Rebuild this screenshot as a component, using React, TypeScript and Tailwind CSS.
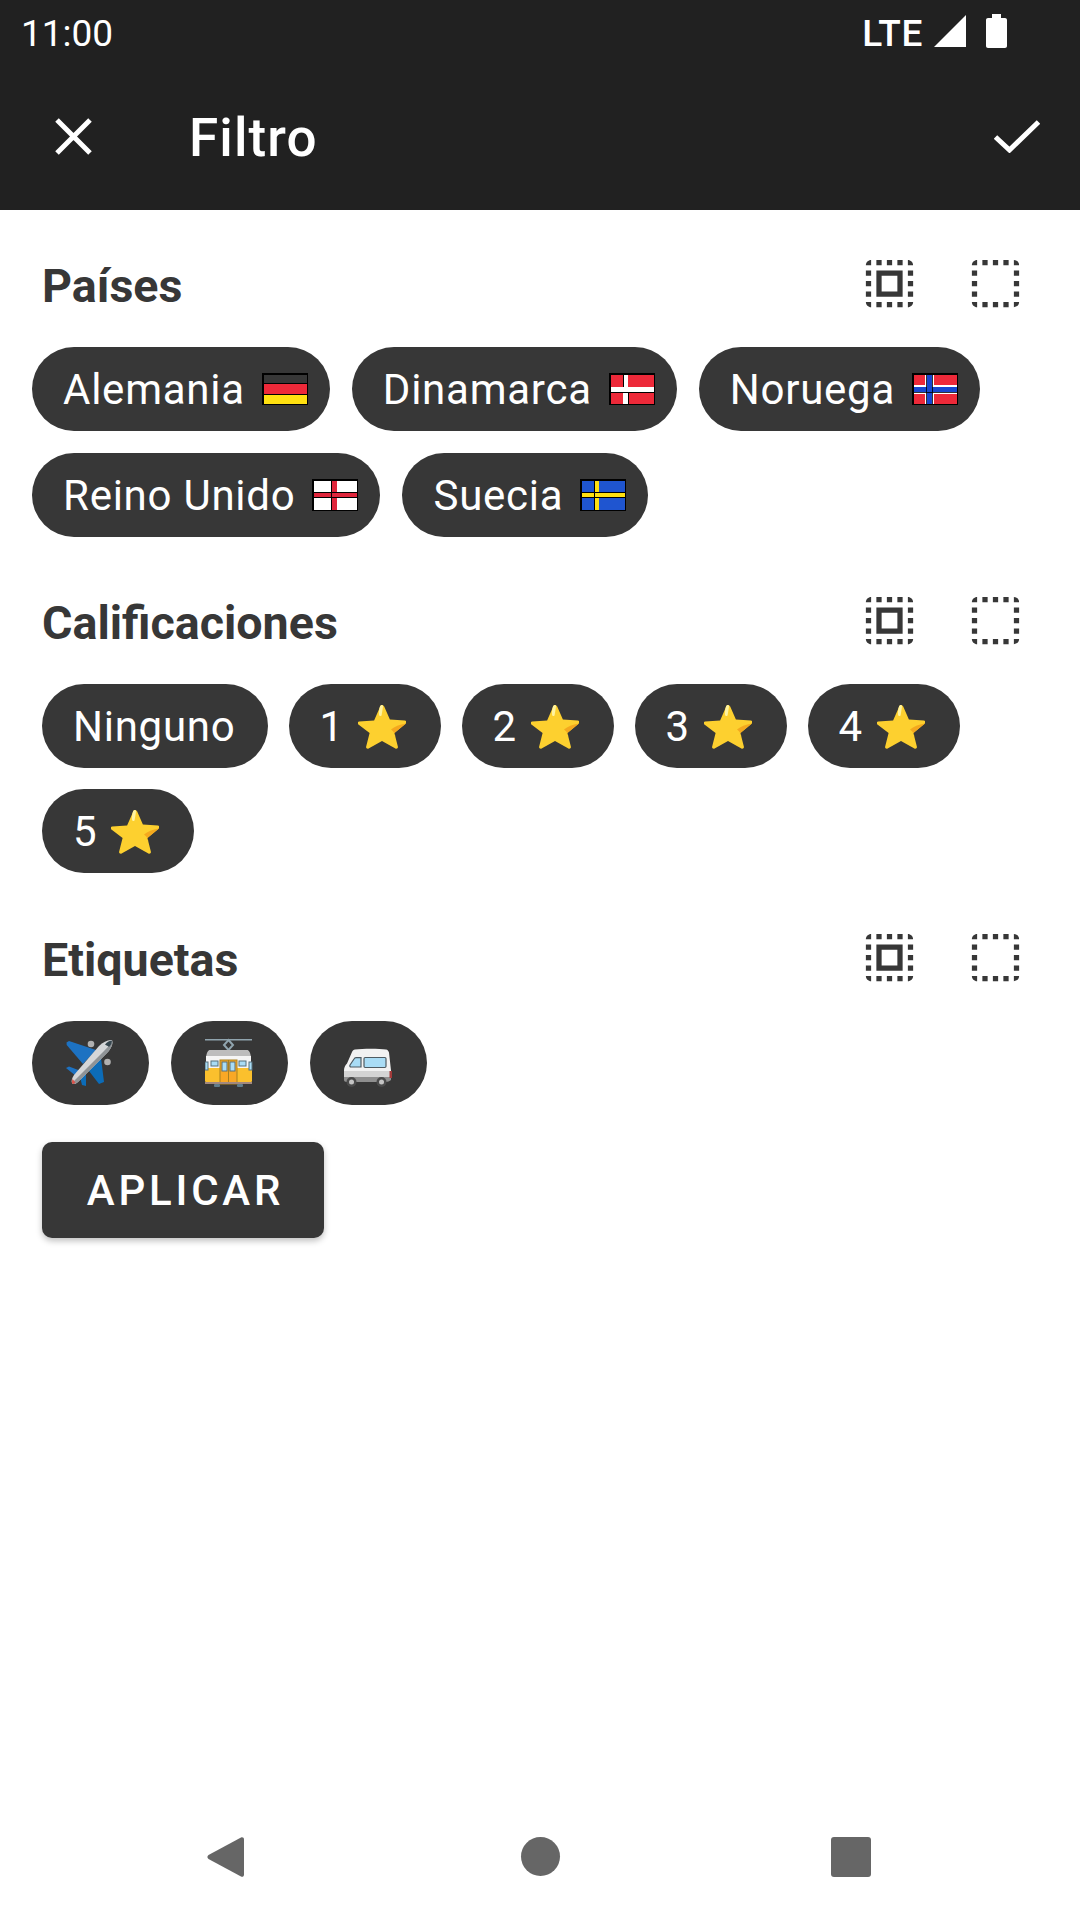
import React from "react";

const font = { fontFamily: "Roboto, sans-serif" };

function SelectAll() {
  return (
    <svg viewBox="0 0 24 24" className="w-[63px] h-[63px]" fill="#373737">
      <path d="M3 5h2V3c-1.1 0-2 .9-2 2zm0 8h2v-2H3v2zm4 8h2v-2H7v2zM3 9h2V7H3v2zm10-6h-2v2h2V3zm6 0v2h2c0-1.1-.9-2-2-2zM5 21v-2H3c0 1.1.9 2 2 2zm-2-4h2v-2H3v2zM9 3H7v2h2V3zm2 18h2v-2h-2v2zm8-8h2v-2h-2v2zm0 8c1.1 0 2-.9 2-2h-2v2zm0-12h2V7h-2v2zm0 8h2v-2h-2v2zm-4 4h2v-2h-2v2zm0-16h2V3h-2v2zM7 17h10V7H7v10zm2-8h6v6H9V9z" />
    </svg>
  );
}
function Deselect() {
  return (
    <svg viewBox="0 0 24 24" className="w-[63px] h-[63px]" fill="#373737">
      <path d="M3 5h2V3c-1.1 0-2 .9-2 2zm0 8h2v-2H3v2zm4 8h2v-2H7v2zM3 9h2V7H3v2zm10-6h-2v2h2V3zm6 0v2h2c0-1.1-.9-2-2-2zM5 21v-2H3c0 1.1.9 2 2 2zm-2-4h2v-2H3v2zM9 3H7v2h2V3zm2 18h2v-2h-2v2zm8-8h2v-2h-2v2zm0 8c1.1 0 2-.9 2-2h-2v2zm0-12h2V7h-2v2zm0 8h2v-2h-2v2zm-4 4h2v-2h-2v2zm0-16h2V3h-2v2z" />
    </svg>
  );
}

function Flag({ children }: { children: React.ReactNode }) {
  return (
    <svg viewBox="0 0 46 32" className="w-[46px] h-[32px] shrink-0" shapeRendering="crispEdges">
      {children}
      <rect x="0.75" y="0.75" width="44.5" height="30.5" fill="none" stroke="#000" strokeWidth="1.5" />
    </svg>
  );
}

const flags: Record<string, React.ReactNode> = {
  de: (
    <>
      <rect width="46" height="11" fill="#373737" />
      <rect y="11" width="46" height="10" fill="#ED2939" />
      <rect y="21" width="46" height="11" fill="#FFE010" />
      <rect y="10" width="46" height="1" fill="#000" />
      <rect y="21" width="46" height="1" fill="#000" />
    </>
  ),
  dk: (
    <>
      <rect width="46" height="32" fill="#ED2939" />
      <rect x="14" width="5" height="32" fill="#fff" />
      <rect y="14" width="46" height="5" fill="#fff" />
      <rect x="14" width="1" height="14" fill="#000" />
      <rect x="19" y="19" width="1" height="13" fill="#000" />
      <rect y="19" width="46" height="1" fill="#000" />
    </>
  ),
  no: (
    <>
      <rect width="46" height="32" fill="#ED2939" />
      <rect x="13" width="9" height="32" fill="#fff" />
      <rect y="12" width="46" height="9" fill="#fff" />
      <rect x="15" width="5" height="32" fill="#1746D0" />
      <rect y="14" width="46" height="5" fill="#1746D0" />
      <rect x="14" width="1" height="32" fill="#000" opacity="0.8" />
      <rect x="20" width="1" height="32" fill="#000" opacity="0.8" />
      <rect y="19" width="46" height="1" fill="#000" opacity="0.8" />
    </>
  ),
  gb: (
    <>
      <rect width="46" height="32" fill="#fff" />
      <rect x="20" width="5" height="32" fill="#E0263C" />
      <rect y="14" width="46" height="4" fill="#E0263C" />
      <rect x="19" width="1" height="32" fill="#000" />
      <rect y="13" width="46" height="1" fill="#000" />
      <rect y="18" width="46" height="1" fill="#000" />
    </>
  ),
  se: (
    <>
      <rect width="46" height="32" fill="#1F55D0" />
      <rect x="15" width="4" height="32" fill="#FFE010" />
      <rect y="14" width="46" height="4" fill="#FFE010" />
      <rect x="14" width="1" height="32" fill="#000" />
      <rect y="13" width="46" height="1" fill="#000" />
      <rect y="18" width="46" height="1" fill="#000" />
    </>
  ),
};

function Star() {
  return (
    <svg viewBox="0 0 48 48" preserveAspectRatio="none" className="w-[48px] h-[45px] shrink-0">
      <path d="M24 1c1 0 1.700.6 2.200 1.700l5.700 13.800 15 1.200c1.600.2 2.200 1.900 1 3L36.400 31l3.500 14.600c.3 1.500-1.200 2.600-2.500 1.800L24 39.500 10.600 47.400c-1.300.8-2.800-.3-2.500-1.800L11.600 31 .1 21.700c-1.200-1.100-.6-2.800 1-3l15-1.200 5.700-13.800C22.300 1.600 23 1 24 1z" fill="#FDD02F" />
      <path d="M47.900 20.700 36.400 31l1.300 5.300c-.6-4.800-2.100-7.400-4.700-9.200 3.800-3 8.300-5.400 14.900-6.400z" fill="#F4A81E" />
      <path d="M24 1c-.9 0-1.600.6-2 1.600-.8 2-1.400 6.500-.9 9.400.3 1.200 2.200 1.100 2.500-.1L25 3c.1-1-.2-1.700-1-2z" fill="#FFF3A0" />
    </svg>
  );
}

function Plane() {
  return (
    <svg viewBox="0 0 48 48" className="w-[48px] h-[48px] shrink-0 mr-[2px]">
      <circle cx="25" cy="5" r="3.300" fill="#B0B0B0" />
      <circle cx="41.500" cy="23" r="3.300" fill="#B0B0B0" />
      <path d="M.5 3.500 3 2 30 11 17 25 .7 6z" fill="#1D72C2" />
      <path d="M35 19 23 32 33 45 38 43z" fill="#0C6CB8" />
      <path d="M0 29 3 27.500 15 32 10 37z" fill="#1D72C2" />
      <path d="M13 34 20 33 20 47 16 46z" fill="#0C6CB8" />
      <path d="M8 36 33 7C37 3 42 .5 46 1 47.500 4 45 10 41 14L12 43C10 45 7 46 6 44 5 42 6 39 8 36z" fill="#D4D6D8" />
      <path d="M6 44 38 12C41 9 45 5 46.600 2.500 46.800 6 44 11 41 14L12 43C10 45 7 46 6 44z" fill="#8F9396" />
      <path d="M39 5.500C41 3 44 1.500 46 1.500 46 4 45 6 43 8 42 7 40.500 6.500 39 5.500z" fill="#37474F" />
      <path d="M6.500 40 9.500 43.500C8 45 6.500 45.500 6 44 5.700 43 6 41.500 6.500 40z" fill="#D8544C" />
    </svg>
  );
}

function Tram() {
  return (
    <svg viewBox="0 0 48 50" className="w-[48px] h-[50px] shrink-0 mr-[2px] -mt-[2px]">
      <rect x="0" y="2" width="47" height="1.500" fill="#90A4AE" />
      <path d="M23.500 3 28 8 23.500 13 19 8z" fill="none" stroke="#90A4AE" strokeWidth="2" />
      <path d="M5 13h37c2 0 3 2 4 7H1c1-5 2-7 4-7z" fill="#BDBDBD" />
      <rect x="1" y="19" width="45" height="27" fill="#F5F5F5" />
      <rect x="0" y="31" width="47" height="14" rx="1" fill="#FBC02D" />
      <rect x="15" y="23" width="17" height="24" fill="#F9A825" stroke="#A8801F" strokeWidth="1" />
      <rect x="23" y="23" width="1" height="24" fill="#A8801F" />
      <rect x="17" y="25" width="5" height="9" fill="#A9DCF5" stroke="#57707C" strokeWidth="1" />
      <rect x="25" y="25" width="5" height="9" fill="#A9DCF5" stroke="#57707C" strokeWidth="1" />
      <rect x="0" y="25" width="3" height="8" fill="#A9DCF5" stroke="#57707C" strokeWidth="1" />
      <rect x="44" y="25" width="3" height="8" fill="#A9DCF5" stroke="#57707C" strokeWidth="1" />
      <rect x="6" y="24" width="7" height="5" fill="#A9DCF5" stroke="#57707C" strokeWidth="1" />
      <rect x="34" y="24" width="7" height="5" fill="#A9DCF5" stroke="#57707C" strokeWidth="1" />
      <rect x="0" y="45" width="47" height="2" fill="#A1887F" />
      <rect x="9" y="47" width="6" height="3" rx="1" fill="#607D8B" />
      <rect x="32" y="47" width="6" height="3" rx="1" fill="#607D8B" />
    </svg>
  );
}

function Van() {
  return (
    <svg viewBox="0 0 50 40" className="w-[50px] h-[40px] shrink-0 mt-[9px] mr-[1px]">
      <path d="M12 1.500C20 .5 36 .5 43 1.500c1.500.2 2.500 1.500 3 3l2 18v7H1v-7c0-3 1-5 3-7L9 4c.7-1.400 1.600-2.300 3-2.500z" fill="#F2F2F2" />
      <path d="M1 23h47v7H1z" fill="#D4D4D4" />
      <path d="M1 29h47v3c-1 1-4 2-5 2H4c-2 0-3-1-3-2z" fill="#8F8F8F" />
      <path d="M7 17 11 11c.5-1 1-1.300 2-1.300h5V19H8c-1 0-1.500-1-1-2z" fill="#A9DCF5" stroke="#4F5B62" strokeWidth="1.200" />
      <rect x="21" y="9.500" width="22" height="10" rx="1.200" fill="#A9DCF5" stroke="#4F5B62" strokeWidth="1.200" />
      <circle cx="8.500" cy="34" r="5" fill="#4A4A4A" />
      <circle cx="8.500" cy="34" r="2.500" fill="#C4C4C4" />
      <circle cx="38.500" cy="34" r="5" fill="#4A4A4A" />
      <circle cx="38.500" cy="34" r="2.500" fill="#C4C4C4" />
      <rect x="46.500" y="23" width="2.500" height="7" fill="#A33A3A" />
    </svg>
  );
}

function CountryChip({ label, flag }: { label: string; flag: string }) {
  return (
    <div className="h-[84px] rounded-[42px] bg-[#373737] text-white text-[42px] tracking-[0.75px] flex items-center pl-[31px] pr-[22px] gap-[17px]">
      <span>{label}</span>
      <Flag>{flags[flag]}</Flag>
    </div>
  );
}

function StarChip({ n }: { n: number }) {
  return (
    <div className="h-[84px] w-[152px] rounded-[42px] bg-[#373737] text-white text-[42px] tracking-[0.75px] flex items-center pl-[31px] gap-[14px]">
      <span>{n}</span>
      <Star />
    </div>
  );
}

function IconChip({ children }: { children: React.ReactNode }) {
  return (
    <div className="h-[84px] w-[117px] rounded-[42px] bg-[#373737] flex items-center justify-center">{children}</div>
  );
}

function SectionHead({ title }: { title: string }) {
  return (
    <div className="h-[63px] flex items-center pl-[42px] pr-[53px]">
      <span className="text-[46.6px] font-bold text-[#373737] flex-1 leading-none pt-[5px]">{title}</span>
      <div className="flex gap-[43px]">
        <SelectAll />
        <Deselect />
      </div>
    </div>
  );
}

export default function App() {
  return (
    <div className="w-[1080px] h-[1920px] bg-white flex flex-col overflow-hidden" style={font}>
      {/* status bar */}
      <div className="h-[63px] bg-[#212121] flex items-center pl-[21px] pr-[73px] text-white">
        <span className="text-[37px] leading-none flex-1 pt-[3px]">11:00</span>
        <span className="text-[37px] leading-none font-medium tracking-[0.6px] pt-[3px]">LTE</span>
        <svg viewBox="0 0 32 32" className="w-[32px] h-[32px] ml-[11px] -mt-[2px]">
          <path d="M32 0V32H0z" fill="#fff" />
        </svg>
        <svg viewBox="0 0 21 34" className="w-[21px] h-[34px] ml-[20px] -mt-[2px]">
          <path d="M6 0h9v4h4c1.100 0 2 .9 2 2v26c0 1.100-.9 2-2 2H2c-1.100 0-2-.9-2-2V6c0-1.100.9-2 2-2h4z" fill="#fff" />
        </svg>
      </div>
      {/* toolbar */}
      <div className="h-[147px] bg-[#212121] flex items-center text-white">
        <div className="w-[189px] pl-[55px] flex items-center">
          <svg viewBox="0 0 37 37" className="w-[37px] h-[37px]">
            <path d="M2 2 35 35M35 2 2 35" stroke="#fff" strokeWidth="5" fill="none" />
          </svg>
        </div>
        <span className="text-[53px] font-medium flex-1 tracking-[1.1px] pt-[5px]">Filtro</span>
        <svg viewBox="0 0 46 33" className="w-[46px] h-[33px] mr-[40px]">
          <path d="M1.500 17 15.500 30 44.500 2" stroke="#fff" strokeWidth="5" fill="none" />
        </svg>
      </div>

      <div className="flex-1 flex flex-col pt-[42px]">
        <SectionHead title="Países" />
        <div className="mt-[32px] pl-[32px] flex flex-wrap gap-x-[22px] gap-y-[22px] w-[1000px]">
          <CountryChip label="Alemania" flag="de" />
          <CountryChip label="Dinamarca" flag="dk" />
          <CountryChip label="Noruega" flag="no" />
          <CountryChip label="Reino Unido" flag="gb" />
          <CountryChip label="Suecia" flag="se" />
        </div>

        <div className="mt-[52px]">
          <SectionHead title="Calificaciones" />
        </div>
        <div className="mt-[32px] pl-[42px] flex flex-wrap gap-x-[21px] gap-y-[21px] w-[1000px]">
          <div className="h-[84px] rounded-[42px] bg-[#373737] text-white text-[42px] tracking-[0.75px] flex items-center pl-[31px] pr-[32px]">Ninguno</div>
          <StarChip n={1} />
          <StarChip n={2} />
          <StarChip n={3} />
          <StarChip n={4} />
          <StarChip n={5} />
        </div>

        <div className="mt-[53px]">
          <SectionHead title="Etiquetas" />
        </div>
        <div className="mt-[32px] pl-[32px] flex gap-x-[22px]">
          <IconChip><Plane /></IconChip>
          <IconChip><Tram /></IconChip>
          <IconChip><Van /></IconChip>
        </div>

        <div className="mt-[37px] ml-[42px] w-[282px] h-[96px] rounded-[10px] bg-[#373737] text-white text-[42px] font-medium tracking-[0.09em] pl-[5px] flex items-center justify-center shadow-[0_3px_6px_rgba(0,0,0,0.25)]">
          APLICAR
        </div>
      </div>

      {/* nav bar */}
      <div className="h-[126px] flex items-start relative">
        <div className="absolute left-[207px] top-[42px]">
          <svg viewBox="0 0 37 42" className="w-[37px] h-[42px]">
            <path d="M34 1.500 1.500 19c-1.500 1-1.500 3 0 4L34 40.500c1.500.8 3-.2 3-1.800V3.300C37 1.700 35.500.7 34 1.500z" fill="#666" />
          </svg>
        </div>
        <div className="absolute left-[521px] top-[43px] w-[39px] h-[39px] rounded-full bg-[#666]" />
        <div className="absolute left-[831px] top-[43px] w-[40px] h-[40px] rounded-[3px] bg-[#666]" />
      </div>
    </div>
  );
}
